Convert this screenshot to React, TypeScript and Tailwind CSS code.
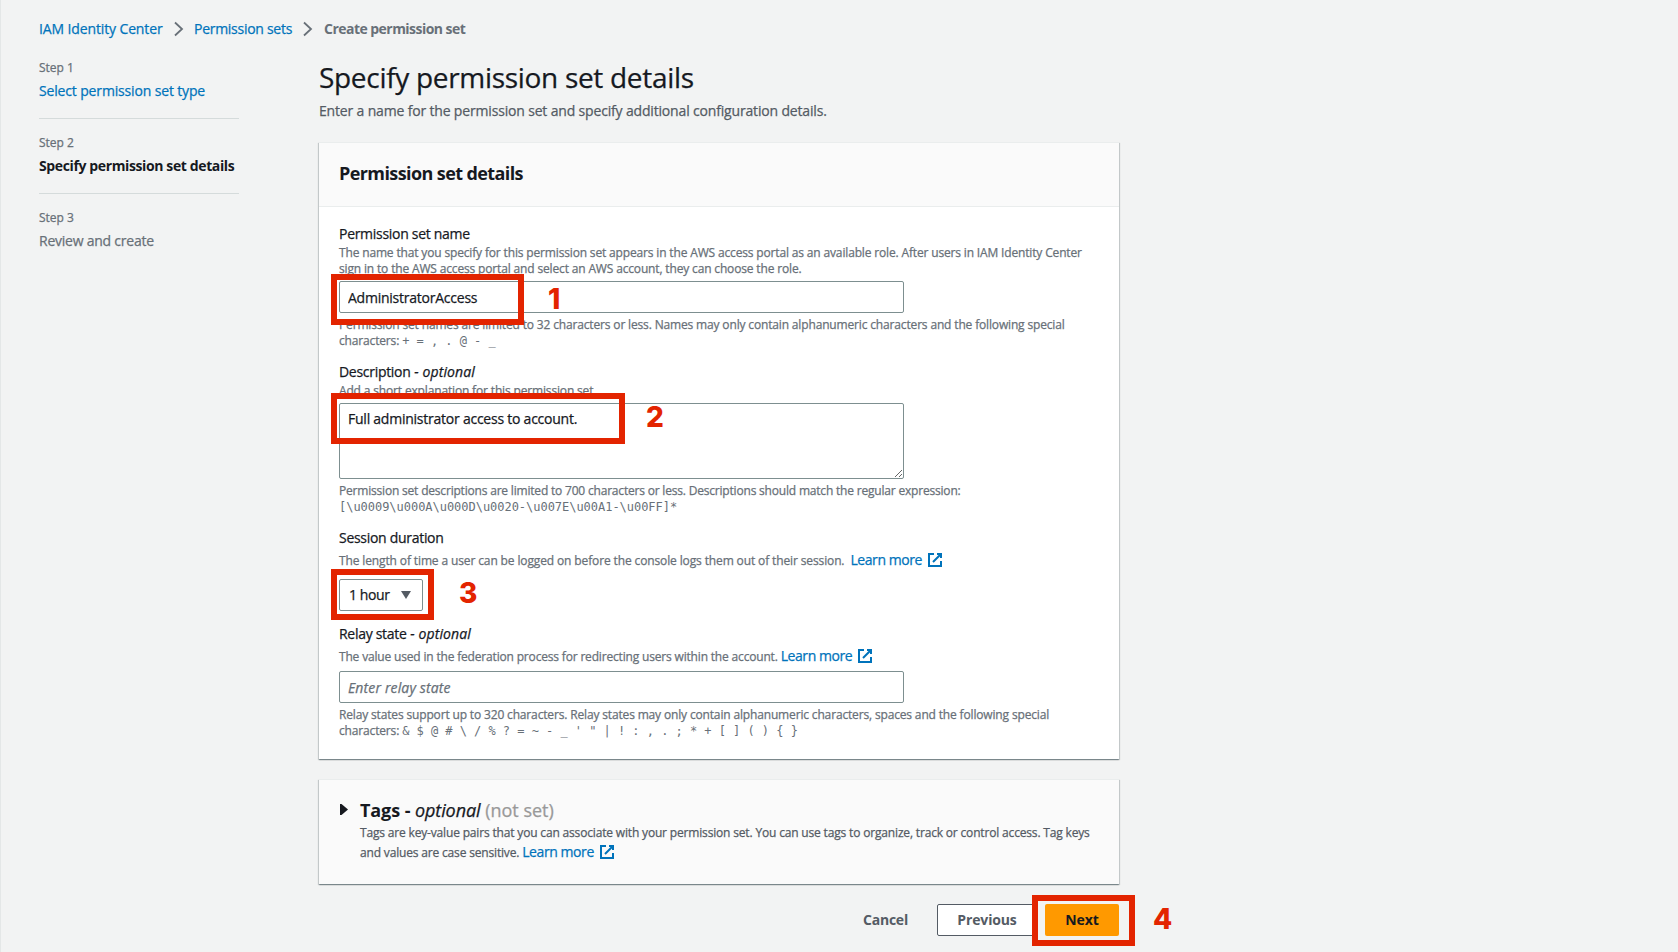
import type { ReactNode } from "react";

function ExternalIcon() {
  return (
    <svg className="ml-[5px] inline-block size-4 shrink-0 align-[-3px]" viewBox="0 0 16 16" fill="none" stroke="currentColor" strokeWidth="2">
      <path d="M10 2h4v4M6 10l8-8" />
      <path d="M14 9.048V14H2V2h5" />
    </svg>
  );
}

function LearnMore() {
  return (
    <a href="#" className="text-[14px] leading-none tracking-[-0.03em] text-[#0073bb]">
      Learn more
      <ExternalIcon />
    </a>
  );
}

function Chevron() {
  return (
    <svg className="h-4 w-3 shrink-0" viewBox="0 0 12 16" fill="none" stroke="#687078" strokeWidth="1.8">
      <path d="M2 1.5 9 8l-7 6.5" />
    </svg>
  );
}

function Step({ n, last, children }: { n: number; last?: boolean; children: ReactNode }) {
  return (
    <li className={last ? "pt-4" : n === 1 ? "border-b border-[#d5dbdb] pb-4" : "border-b border-[#d5dbdb] py-4"}>
      <div className="mb-1 text-[12px] leading-4 text-[#687078]">Step {n}</div>
      {children}
    </li>
  );
}

function Label({ children, optional }: { children: ReactNode; optional?: boolean }) {
  return (
    <div className="text-[14px] leading-[22px] tracking-[-0.021em] text-[#16191f]">
      {children}
      {optional && <i className="tracking-[0.008em]"> - optional</i>}
    </div>
  );
}

function Hint({ children, className = "leading-4 tracking-[-0.013em]" }: { children: ReactNode; className?: string }) {
  return <div className={`text-[12px] whitespace-nowrap text-[#687078] ${className}`}>{children}</div>;
}

function Mono({ children }: { children: ReactNode }) {
  return (
    <code className="font-['DejaVu_Sans_Mono',monospace] text-[12px] leading-none tracking-[-0.03px] [-webkit-text-stroke:0]">{children}</code>
  );
}

function Mark({ className, digit, digitClass }: { className: string; digit: string; digitClass: string }) {
  return (
    <>
      <div className={`pointer-events-none absolute border-6 border-[#e32400] ${className}`} />
      <span
        className={`absolute font-['Inter',sans-serif] text-[28px] leading-7 font-extrabold tracking-normal text-[#e32400] [-webkit-text-stroke:0] ${digitClass}`}
      >
        {digit}
      </span>
    </>
  );
}

const CARD =
  "border-t border-[#eaeded] shadow-[0_1px_1px_0_rgba(0,28,36,0.3),1px_1px_1px_0_rgba(0,28,36,0.15),-1px_1px_1px_0_rgba(0,28,36,0.15)]";
const FIELD =
  "block w-[565px] rounded-[2px] border border-[#7d8f90] bg-white px-2 text-[14px] tracking-[-0.017em] text-[#16191f] outline-none placeholder:tracking-[0.01em] placeholder:text-[#687078] placeholder:italic placeholder:opacity-100";

export default function App() {
  return (
    <div className="h-[952px] overflow-hidden border-l border-[#e4e7e7] bg-[#f2f3f3] pt-[18px] pl-[38px] font-['Open_Sans',sans-serif] text-[14px] text-[#16191f] [-webkit-text-stroke:0.25px]">
      <nav className="flex h-[22px] items-center leading-[22px]">
        <a href="#" className="w-[124px] tracking-[-0.009em] whitespace-nowrap text-[#0073bb]">IAM Identity Center</a>
        <span className="flex w-[31px] justify-center"><Chevron /></span>
        <a href="#" className="w-[98.5px] tracking-[-0.02em] whitespace-nowrap text-[#0073bb]">Permission sets</a>
        <span className="flex w-[31.5px] justify-center"><Chevron /></span>
        <span className="font-bold tracking-[-0.038em] whitespace-nowrap text-[#687078] [-webkit-text-stroke:0]">Create permission set</span>
      </nav>

      <div className="mt-[19px] flex">
        <ol className="mt-px mr-20 w-[200px] shrink-0 leading-[22px]">
          <Step n={1}>
            <a href="#" className="block tracking-[-0.011em] text-[#0073bb]">Select permission set type</a>
          </Step>
          <Step n={2}>
            <div className="font-bold tracking-[-0.027em] whitespace-nowrap [-webkit-text-stroke:0]">Specify permission set details</div>
          </Step>
          <Step n={3} last>
            <div className="tracking-[-0.017em] text-[#687078]">Review and create</div>
          </Step>
        </ol>

        <main className="w-[800px]">
          <h1 className="text-[28px] leading-9 tracking-[-0.011em]">Specify permission set details</h1>
          <p className="mt-[5px] mb-5 leading-[22px] tracking-[-0.012em] text-[#545b64]">
            Enter a name for the permission set and specify additional configuration details.
          </p>

          <section className={`bg-white ${CARD}`}>
            <h2 className="border-b border-[#eaeded] bg-[#fafafa] px-5 pt-[19px] pb-[22px] text-[18px] leading-[22px] font-bold tracking-[-0.033em] [-webkit-text-stroke:0]">
              Permission set details
            </h2>
            <div className="flex flex-col gap-3 px-5 pt-4 pb-5">
              <div className="relative">
                <Label>Permission set name</Label>
                <Hint>
                  The name that you specify for this permission set appears in the AWS access portal as an available role. After users in IAM Identity Center
                  <br />
                  sign in to the AWS access portal and select an AWS account, they can choose the role.
                </Hint>
                <input className={`my-1 h-8 ${FIELD}`} defaultValue="AdministratorAccess" />
                <Hint>
                  Permission set names are limited to 32 characters or less. Names may only contain alphanumeric characters and the following special
                  <br />
                  characters: <Mono>+ = , . @ - _</Mono>
                </Hint>
                <Mark className="top-[51px] -left-2 h-[51px] w-[193px]" digit="1" digitClass="top-[62px] left-[209px]" />
              </div>

              <div className="relative">
                <Label optional>Description</Label>
                <Hint>Add a short explanation for this permission set.</Hint>
                <textarea className={`my-1 h-[76px] resize py-1 leading-[22px] ${FIELD}`} defaultValue="Full administrator access to account." />
                <Hint className="leading-4 tracking-[-0.016em]">
                  Permission set descriptions are limited to 700 characters or less. Descriptions should match the regular expression:
                  <br />
                  <Mono>{"[\\u0009\\u000A\\u000D\\u0020-\\u007E\\u00A1-\\u00FF]*"}</Mono>
                </Hint>
                <Mark className="top-8 -left-2 h-[51px] w-[294px]" digit="2" digitClass="top-[42px] left-[307px]" />
              </div>

              <div className="relative">
                <Label>Session duration</Label>
                <Hint className="h-[22px] pt-px leading-[22px] tracking-[-0.0105em]">
                  The length of time a user can be logged on before the console logs them out of their session.&nbsp; <LearnMore />
                </Hint>
                <button className="mt-2 flex h-8 w-[84px] items-center rounded-[2px] border border-[#7d8f90] bg-white pb-px pl-[9px] tracking-[-0.03em]">
                  1 hour
                  <svg className="mt-px ml-3 h-2 w-2.5" viewBox="0 0 10 8" fill="#545b64">
                    <path d="M0 0h10L5 8z" />
                  </svg>
                </button>
                <Mark className="top-[42px] -left-2 h-[51px] w-[103px]" digit="3" digitClass="top-[52px] left-[120px]" />
              </div>

              <div>
                <Label optional>Relay state</Label>
                <Hint className="h-[22px] pt-px leading-[22px] tracking-[-0.0145em]">
                  The value used in the federation process for redirecting users within the account. <LearnMore />
                </Hint>
                <input className={`my-1 h-8 ${FIELD}`} placeholder="Enter relay state" />
                <Hint>
                  Relay states support up to 320 characters. Relay states may only contain alphanumeric characters, spaces and the following special
                  <br />
                  characters: <Mono>{"& $ @ # \\ / % ? = ~ - _ ' \" | ! : , . ; * + [ ] ( ) { }"}</Mono>
                </Hint>
              </div>
            </div>
          </section>

          <section className={`mt-5 flex bg-[#fafafa] px-5 pt-[19px] pb-[22px] ${CARD}`}>
            <svg className="mt-[5px] mr-3 ml-px h-[11px] w-2 shrink-0" viewBox="0 0 8 11" fill="#16191f">
              <path d="M0 0h1.5L8 5.5 1.5 11H0z" />
            </svg>
            <div>
              <h2 className="mb-px text-[18px] leading-[22px]">
                <b className="tracking-[-0.005em] [-webkit-text-stroke:0]">Tags - </b>
                <i className="tracking-[-0.005em]">optional</i> <span className="text-[#999]">(not set)</span>
              </h2>
              <p className="h-10 pt-px text-[12px] leading-5 tracking-[-0.014em] whitespace-nowrap text-[#545b64]">
                Tags are key-value pairs that you can associate with your permission set. You can use tags to organize, track or control access. Tag keys
                <br />
                and values are case sensitive. <LearnMore />
              </p>
            </div>
          </section>

          <div className="relative mt-5 flex justify-end font-bold [-webkit-text-stroke:0]">
            <button className="mr-[29px] h-8 pb-0.5 tracking-[-0.015em] text-[#545b64]">Cancel</button>
            <button className="mr-2 h-8 w-[100px] rounded-[2px] border border-[#545b64] bg-white pb-0.5 tracking-[-0.01em] text-[#545b64]">Previous</button>
            <button className="h-8 w-[74px] rounded-[2px] bg-[#ff9900] pb-0.5 tracking-[-0.01em] text-[#16191f]">Next</button>
            <Mark className="-top-[9px] -right-4 h-[51px] w-[103px]" digit="4" digitClass="top-[1px] left-[834px]" />
          </div>
        </main>
      </div>
    </div>
  );
}
